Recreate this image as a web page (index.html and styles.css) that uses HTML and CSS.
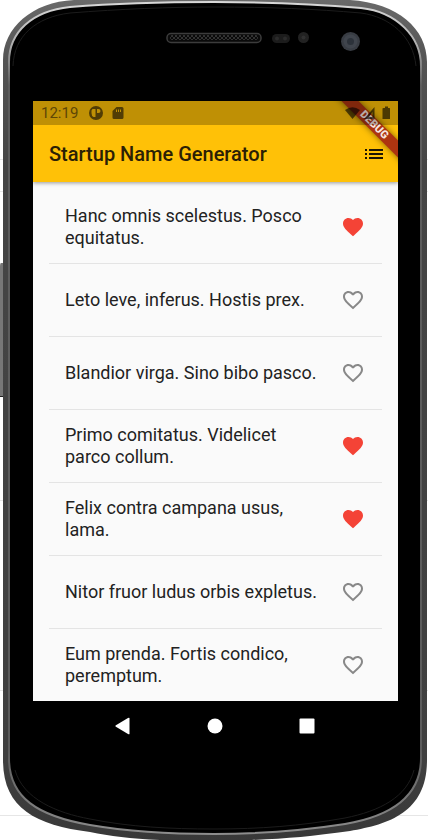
FILE: index.html
```html
<!DOCTYPE html>
<html lang="en">
<head>
<meta charset="utf-8">
<meta name="viewport" content="width=device-width, initial-scale=1">
<title>Startup Name Generator</title>
<link rel="stylesheet" href="styles.css">
</head>
<body>
<svg class="defs" aria-hidden="true">
  <symbol id="heart" viewBox="0 0 24 24"><path d="M12 21.35l-1.45-1.32C5.4 15.36 2 12.28 2 8.5 2 5.42 4.42 3 7.5 3c1.74 0 3.41.81 4.5 2.09C13.09 3.81 14.76 3 16.5 3 19.58 3 22 5.42 22 8.5c0 3.78-3.4 6.86-8.55 11.54L12 21.35z"/></symbol>
  <symbol id="heart-outline" viewBox="0 0 24 24"><path d="M16.5 3c-1.74 0-3.41.81-4.5 2.09C10.91 3.81 9.24 3 7.5 3 4.42 3 2 5.42 2 8.5c0 3.78 3.4 6.86 8.55 11.54L12 21.35l1.45-1.32C18.6 15.36 22 12.28 22 8.5 22 5.42 19.58 3 16.5 3zm-4.4 15.55l-.1.1-.1-.1C7.14 14.24 4 11.39 4 8.5 4 6.5 5.5 5 7.5 5c1.54 0 3.04.99 3.57 2.36h1.87C13.46 5.99 14.96 5 16.5 5c2 0 3.5 1.5 3.5 3.5 0 2.89-3.14 5.74-7.9 10.05z"/></symbol>
</svg>
<div class="device">
  <svg class="shell" viewBox="0 0 428 840" preserveAspectRatio="none" aria-hidden="true">
    <defs>
      <linearGradient id="rim" x1="0" y1="0" x2="0" y2="1">
        <stop offset="0" stop-color="#6a6a6a"/><stop offset=".07" stop-color="#555"/><stop offset=".2" stop-color="#454545"/><stop offset=".9" stop-color="#404040"/><stop offset="1" stop-color="#383838"/>
      </linearGradient>
      <linearGradient id="shine" x1="0" y1="0" x2="0" y2="1">
        <stop offset="0" stop-color="#d8d8d8"/><stop offset=".05" stop-color="#b0b0b0"/><stop offset=".1" stop-color="#5c5c5c"/><stop offset=".9" stop-color="#5c5c5c"/><stop offset="1" stop-color="#8c8c8c"/>
      </linearGradient>
      <pattern id="mesh" width="4" height="4" patternUnits="userSpaceOnUse"><path d="M0 0l2 2 2-2M0 4l2-2 2 2" fill="none" stroke="#444" stroke-width=".7"/></pattern>
    </defs>
    <path d="M0 159.500H428M0 191.500H428M0 500.500H428M0 690.500H428M0 815.500H428" stroke="#e6e6e6"/>
    <path d="M4 263H1Q0 263 0 266V397H4z" fill="#777"/><path d="M0 396h4v1H0z" fill="#222"/>
    <path d="M3 60C3 28 32 2 74 0L110-2H320L350 0C398 3 427 29 427 62V760C427 812 390 824 350 831C300 838 270 840 214 841C150 841 120 838 90 832C35 825 3 808 3 760z" fill="url(#rim)"/>
    <path d="M9 62C9 32 32 11 70 7C120 3 170 2 214 2C270 2 315 4 361 8C397 12 421 37 421 66V758C421 799 386 817 345 824C300 831 260 834 214 834C160 834 125 831 90 825C38 816 9 798 9 758z" fill="#000" stroke="url(#shine)" stroke-width="2"/>
    <path d="M13 66C14 36 36 17 70 13C120 9 170 7 214 7C270 7 315 9 361 13C390 17 413 36 416 66M15 770C23 799 57 813 90 819C130 827 170 829 214 829C260 829 300 826 345 818C380 811 407 797 414 770" fill="none" stroke="#1c1c1c" stroke-width="1"/>
    <rect x="167" y="33.500" width="94" height="9" rx="4" fill="#0a0a0a" stroke="#3c3c3c" stroke-width="1.500"/>
    <rect x="170" y="35" width="88" height="5" rx="2" fill="url(#mesh)"/>
    <rect x="272" y="34" width="18" height="9" rx="4.500" fill="#1c1c1c"/><circle cx="277" cy="38.500" r="2" fill="#2b2b2b"/><circle cx="285" cy="38.500" r="2" fill="#2b2b2b"/>
    <circle cx="303.500" cy="37.500" r="5.500" fill="#222"/><circle cx="303.500" cy="37.500" r="2" fill="#303030"/>
    <circle cx="350.500" cy="41.500" r="9.500" fill="#383c43"/><circle cx="350.500" cy="41.500" r="7" fill="#40454d"/><circle cx="350.500" cy="41.500" r="3.500" fill="#2c323a"/>
  </svg>
  <div class="screen">
    <div class="status">
      <span class="time">12:19</span>
      <svg class="s-icon" viewBox="0 0 14 14" aria-hidden="true"><path fill-rule="evenodd" d="M7 0a7 7 0 100 14A7 7 0 007 0zM3.500 3H6.500V11H4.500Q2.500 10 2.500 7V4.500zM8 3h1.500q2 0 2 2t-2 2H8z"/></svg>
      <svg class="s-icon" viewBox="0 0 14 14" aria-hidden="true"><path fill-rule="evenodd" d="M4.500 1H10q1.500 0 1.500 1.500v9q0 1.500-1.500 1.500H2q-1.500 0-1.500-1.500V5zM4 3.500V6h1V3.500zM6 3.500V6h1V3.500zM8 3.500V6h1V3.500z"/></svg>
      <svg class="signals" viewBox="0 0 46 14" aria-hidden="true"><path d="M0 4Q7.500-1.500 15 4L7.500 13z"/><path fill-rule="evenodd" d="M29.500 1v12H19zM27.500 6v5H24z"/><path d="M38.500 2H40V.500h3V2h1.500q.500 0 .500.500V13H37.500V2.500q0-.500 1-.500z"/></svg>
    </div>
    <header class="appbar">
      <h1>Startup Name Generator</h1>
      <button class="icon-button" type="button" aria-label="Saved names"><svg viewBox="0 0 24 24" aria-hidden="true"><path d="M3 13h2v-2H3v2zm0 4h2v-2H3v2zm0-8h2V7H3v2zm4 4h14v-2H7v2zm0 4h14v-2H7v2zM7 7v2h14V7H7z"/></svg></button>
    </header>
    <div class="ribbon-clip"><span class="ribbon">DEBUG</span></div>
    <ul class="names">
      <li><span>Hanc omnis scelestus. Posco equitatus.</span><button class="icon-button saved" type="button" aria-label="Remove from saved"><svg aria-hidden="true"><use href="#heart"/></svg></button></li>
      <li><span>Leto leve, inferus. Hostis prex.</span><button class="icon-button" type="button" aria-label="Save"><svg aria-hidden="true"><use href="#heart-outline"/></svg></button></li>
      <li><span>Blandior virga. Sino bibo pasco.</span><button class="icon-button" type="button" aria-label="Save"><svg aria-hidden="true"><use href="#heart-outline"/></svg></button></li>
      <li><span>Primo comitatus. Videlicet parco collum.</span><button class="icon-button saved" type="button" aria-label="Remove from saved"><svg aria-hidden="true"><use href="#heart"/></svg></button></li>
      <li><span>Felix contra campana usus, lama.</span><button class="icon-button saved" type="button" aria-label="Remove from saved"><svg aria-hidden="true"><use href="#heart"/></svg></button></li>
      <li><span>Nitor fruor ludus orbis expletus.</span><button class="icon-button" type="button" aria-label="Save"><svg aria-hidden="true"><use href="#heart-outline"/></svg></button></li>
      <li><span>Eum prenda. Fortis condico, peremptum.</span><button class="icon-button" type="button" aria-label="Save"><svg aria-hidden="true"><use href="#heart-outline"/></svg></button></li>
    </ul>
    <nav class="navbar" aria-label="System">
      <button class="nav-button" type="button" aria-label="Back"><svg viewBox="0 0 18 18" aria-hidden="true"><path d="M15.500 1v16Q15 17.500 14 17L1.500 9.500V8.500L14 1Q15 .500 15.500 1z"/></svg></button>
      <button class="nav-button" type="button" aria-label="Home"><svg viewBox="0 0 18 18" aria-hidden="true"><circle cx="9" cy="9" r="7.500"/></svg></button>
      <button class="nav-button" type="button" aria-label="Overview"><svg viewBox="0 0 18 18" aria-hidden="true"><rect x="1.500" y="1.500" width="15" height="15" rx="1"/></svg></button>
    </nav>
  </div>
</div>
</body>
</html>
```
FILE: styles.css
```css
* {
  box-sizing: border-box;
}

body {
  margin: 0;
  background: #fff;
  font-family: Roboto, sans-serif;
}

.defs {
  display: none;
}

.device {
  position: relative;
  padding: 101px 30px 90px 33px;
  overflow: hidden;
}

.shell {
  position: absolute;
  inset: 0;
  width: 100%;
  height: 100%;
}

.screen {
  position: relative;
  background: #fafafa;
}

/* Translucent, so the app bar and the ribbon show through it */
.status {
  position: relative;
  z-index: 2;
  display: flex;
  align-items: center;
  gap: 9px;
  height: 24px;
  margin-bottom: -24px;
  padding: 0 7px 0 8px;
  background: rgba(0, 0, 0, 0.25);
  color: #5d4606;
}

.time {
  margin-right: 2px;
  font-size: 15px;
  line-height: 24px;
}

.s-icon {
  width: 14px;
  height: 14px;
  fill: #513d05;
}

.signals {
  width: 46px;
  height: 14px;
  margin-left: auto;
  fill: rgba(0, 0, 0, 0.6);
}

.appbar {
  position: relative;
  display: flex;
  align-items: center;
  justify-content: space-between;
  height: 81px;
  padding: 24px 12px 0 16px;
  background: #ffc107;
  box-shadow: 0 1px 4px rgba(0, 0, 0, 0.4);
}

h1 {
  margin: 0;
  color: #2b2005;
  font-size: 20px;
  font-weight: 500;
  line-height: 24px;
}

.icon-button {
  flex: none;
  width: 24px;
  height: 24px;
  padding: 0;
  border: 0;
  background: none;
  fill: #888;
}

.icon-button svg {
  display: block;
  width: 24px;
  height: 24px;
}

.appbar .icon-button {
  fill: #1c1504;
}

.icon-button.saved {
  fill: #f44336;
}

.ribbon-clip {
  position: absolute;
  top: 0;
  right: 0;
  z-index: 1;
  width: 72px;
  height: 72px;
  overflow: hidden;
  pointer-events: none;
}

.ribbon {
  position: absolute;
  top: 18px;
  right: -26px;
  width: 100px;
  height: 12px;
  background: #ad3410;
  box-shadow: 0 0 6px rgba(0, 0, 0, 0.5);
  color: #f6e6e0;
  font-size: 11px;
  font-weight: 900;
  line-height: 12px;
  text-align: center;
  transform: rotate(45deg);
}

.names {
  margin: 0;
  padding: 9px 16px 0;
  list-style: none;
}

.names li {
  display: flex;
  align-items: center;
  justify-content: space-between;
  gap: 16px;
  min-height: 73px;
  padding: 0 17px 0 16px;
  border-bottom: 1px solid #e4e4e4;
  color: #222;
  font-size: 18px;
  line-height: 22px;
}

.names li:last-child {
  min-height: 72px;
  border-bottom: 0;
}

.navbar {
  display: flex;
  justify-content: center;
  gap: 74px;
  height: 49px;
  padding-right: 1px;
  background: #000;
}

.nav-button {
  display: flex;
  align-items: center;
  padding: 0;
  border: 0;
  background: none;
}

.nav-button svg {
  width: 18px;
  height: 18px;
  fill: #fff;
}
```
